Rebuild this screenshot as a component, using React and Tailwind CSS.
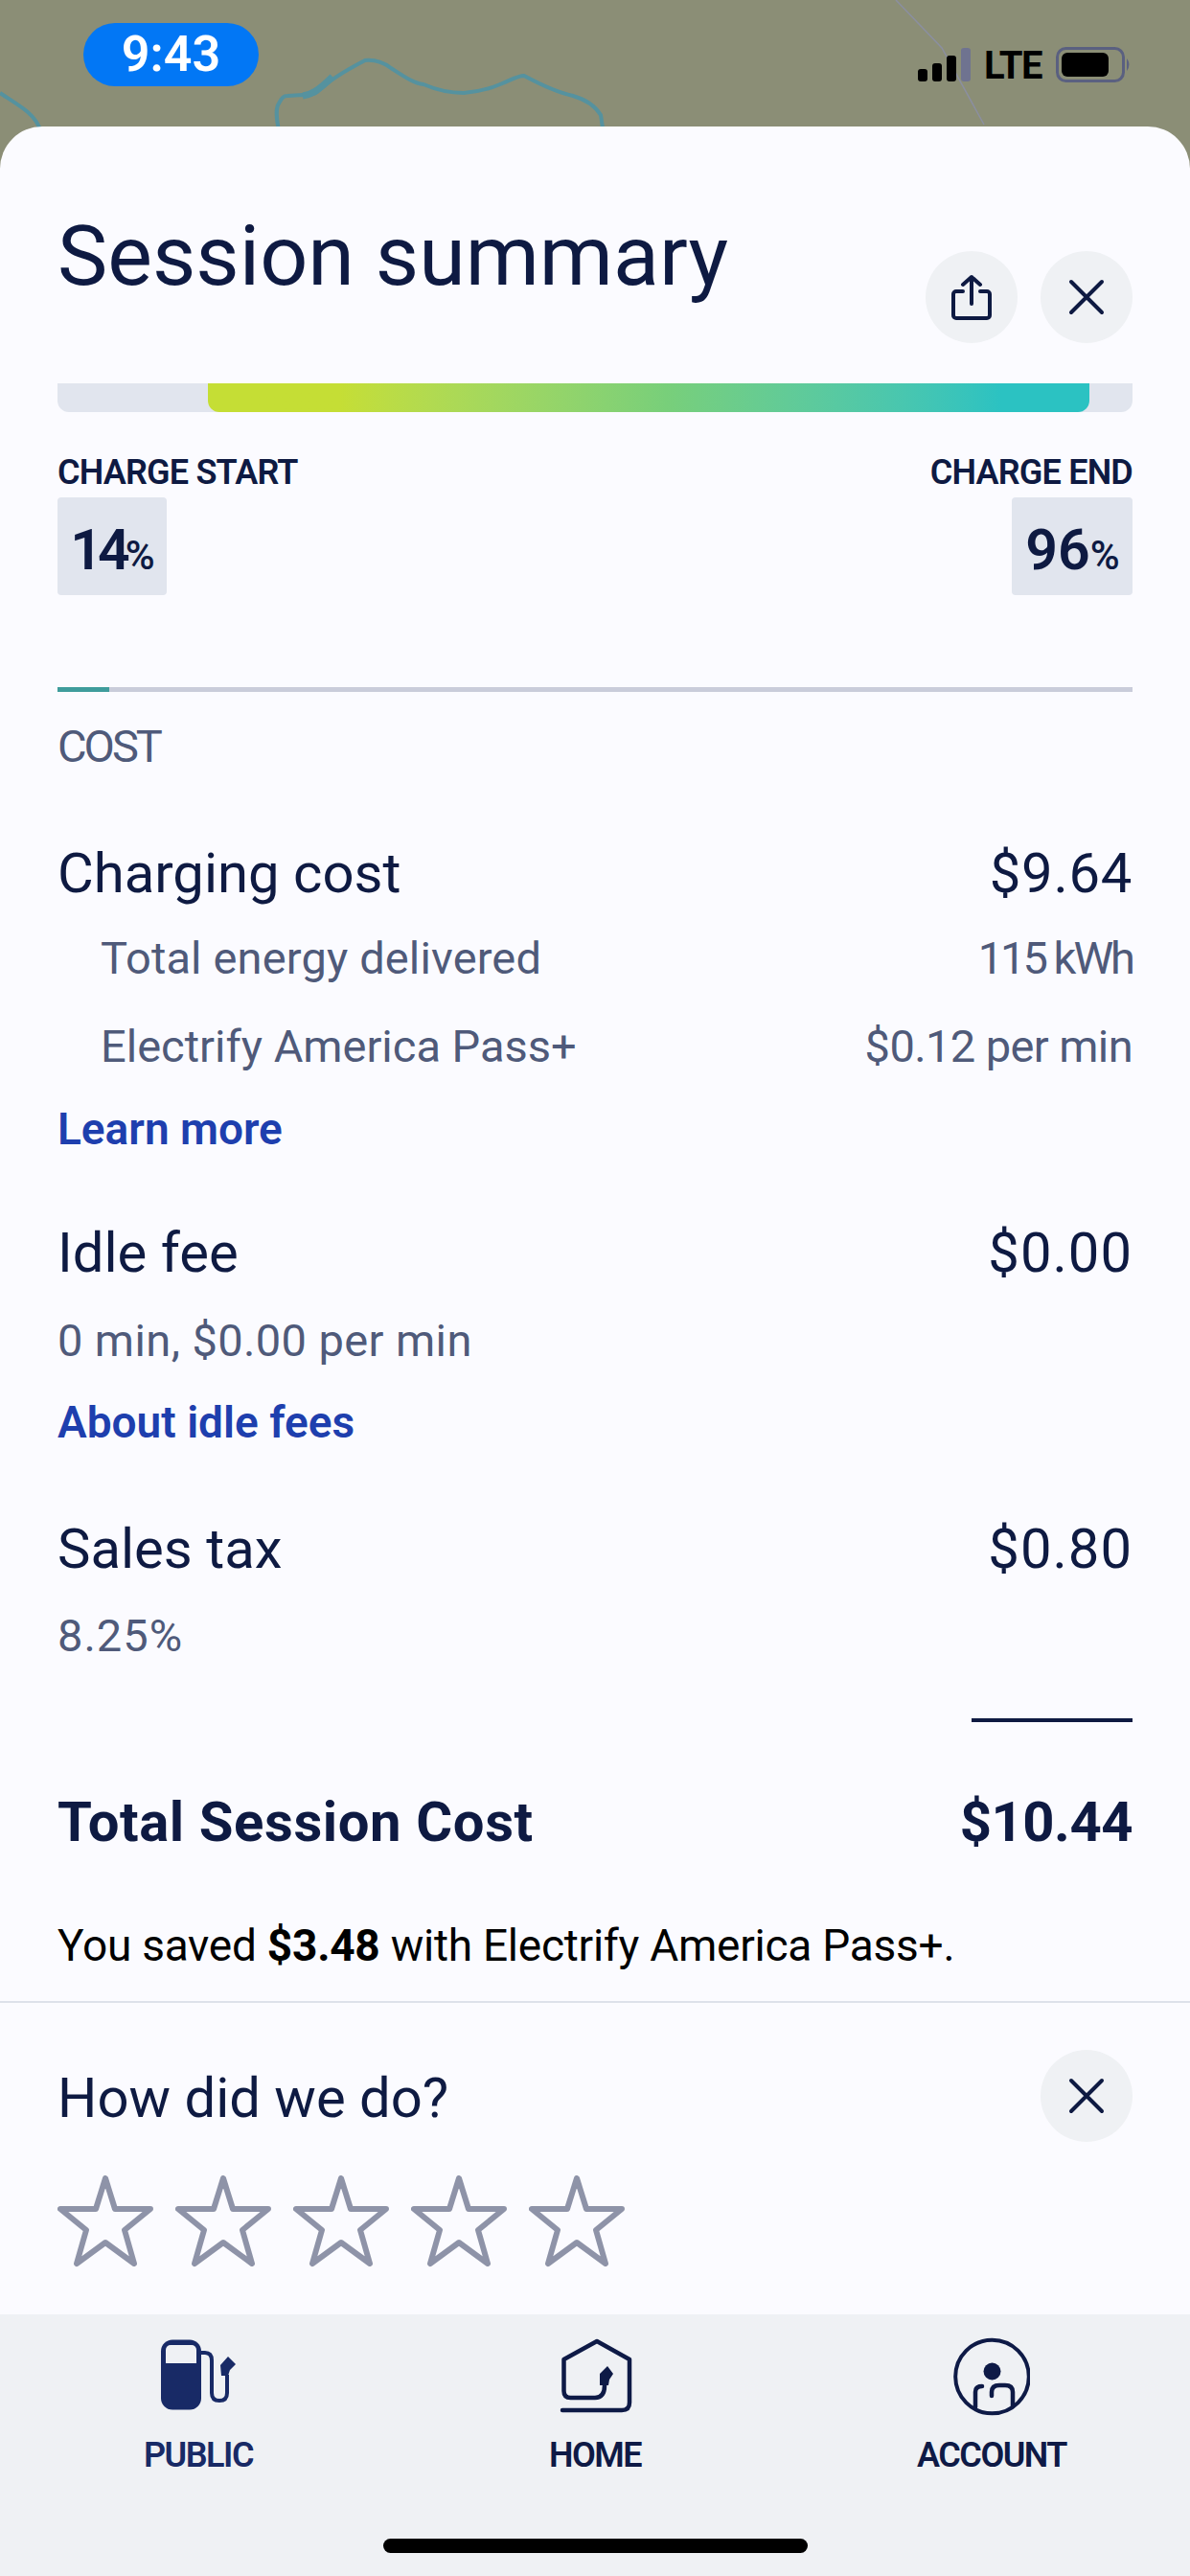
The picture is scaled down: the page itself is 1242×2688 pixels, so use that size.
import React from "react"

const CloseIcon = () => (
  <svg width="40" height="40" viewBox="0 0 40 40" fill="none" stroke="#0e1a42" strokeWidth="4" strokeLinecap="round">
    <path d="M4 4 L36 36 M36 4 L4 36" />
  </svg>
)

const ShareIcon = () => (
  <svg width="44" height="48" viewBox="0 0 44 48" fill="none" stroke="#0e1a42" strokeWidth="4" strokeLinecap="round" strokeLinejoin="round">
    <path d="M13 18 H6 a3 3 0 0 0 -3 3 V43 a3 3 0 0 0 3 3 H38 a3 3 0 0 0 3 -3 V21 a3 3 0 0 0 -3 -3 H31" />
    <path d="M22 31 V3 M13 11 L22 3 L31 11" />
  </svg>
)

const RoundButton = ({ children }) => (
  <button className="flex h-24 w-24 items-center justify-center rounded-full bg-[#eff1f4]">{children}</button>
)

const Star = () => (
  <svg width="100" height="96" viewBox="0 0 100 96" fill="none" stroke="#8e93a8" strokeWidth="6" strokeLinejoin="round">
    <path d="M50 3 L60 35 H97 L70 57 L80 92 L50 70 L20 92 L30 57 L3 35 H40 Z" />
  </svg>
)

const PublicIcon = () => (
  <svg width="80" height="80" viewBox="67 20 80 80">
    <rect x="68" y="21.5" width="42" height="73" rx="12" fill="#182a66" />
    <path d="M73 46 V32 a5 5 0 0 1 5 -5 H100 a5 5 0 0 1 5 5 V46 Z" fill="#eff1f4" />
    <path d="M110 35 H114 q7 0 7 8 V77 q0 8 8 8 q8 0 8 -8 V58" fill="none" stroke="#182a66" strokeWidth="4" />
    <path d="M130 48 L138 39 L146 47 L140 53 L138 59 H131 Z" fill="#182a66" />
  </svg>
)

const HomeIcon = () => (
  <svg width="80" height="80" viewBox="40 20 80 80">
    <path
      d="M46 95 H108 q8 0 8 -8 V42 L82 23 L47.5 42 V75 q0 7 7 7 H80 q10 0 10 -13"
      fill="none"
      stroke="#0e1a46"
      strokeWidth="4.5"
      strokeLinecap="round"
      strokeLinejoin="round"
    />
    <path d="M85 57 L93 49 L99 57 L95 63 L94 69 H85 Z" fill="#0e1a46" />
  </svg>
)

const AccountIcon = () => (
  <svg width="80" height="84" viewBox="34 16 80 84">
    <circle cx="74.5" cy="58" r="38.3" fill="none" stroke="#0e1a46" strokeWidth="4" />
    <circle cx="74.5" cy="52.5" r="9" fill="#0e1a46" />
    <path
      d="M57 90 V74 q0 -6 7 -6 M74 78 V74 q0 -7 8 -7 h6 q8 0 8 7 V89"
      fill="none"
      stroke="#0e1a46"
      strokeWidth="4.5"
      strokeLinecap="round"
    />
  </svg>
)

const MapLines = () => (
  <svg className="absolute left-0 top-0" width="1242" height="180" viewBox="0 0 1242 180" fill="none">
    <path d="M0 97 C12 105 22 111 29 117 C35 122 40 128 44 140" stroke="#55929f" strokeWidth="4" />
    <path
      d="M292 140 C288 124 288 112 291 108 C294 102 296 100 300 100 L316 99 C322 100 327 99 331 96 C340 87 352 78 381 63 C392 62 400 65 408 71 C422 80 432 87 442 88 C456 94 470 97 484 97 C498 96 510 93 522 88 C532 84 540 79 547 79 C560 86 580 96 598 100 C612 104 622 112 627 120 L630 140"
      stroke="#55929f"
      strokeWidth="4"
    />
    <path d="M316 100 C324 99 332 95 347 80" stroke="#55929f" strokeWidth="7" />
    <path d="M935 0 L983 50 L1027 130" stroke="#8b8fa0" strokeWidth="1.5" />
  </svg>
)

const SignalIcon = () => (
  <svg width="56" height="36" viewBox="0 0 56 36">
    <rect x="0" y="22" width="10" height="13" rx="3" fill="#000" />
    <rect x="15" y="16" width="10" height="19" rx="3" fill="#000" />
    <rect x="30" y="8" width="10" height="27" rx="3" fill="#000" />
    <rect x="45" y="0" width="10" height="35" rx="3" fill="#6f7390" />
  </svg>
)

const BatteryIcon = () => (
  <svg width="80" height="38" viewBox="0 0 80 38">
    <rect x="1.5" y="1.5" width="69" height="34" rx="9" fill="none" stroke="#5a6080" strokeWidth="3" />
    <rect x="6" y="6" width="49" height="25" rx="6" fill="#000" />
    <path d="M74 12 Q79 18 74 25 Z" fill="#5a6080" />
  </svg>
)

const CostRow = ({ label, value, className, labelClass = "", valueClass = "" }) => (
  <div className={`flex items-center justify-between ${className}`}>
    <span className={labelClass}>{label}</span>
    <span className={valueClass}>{value}</span>
  </div>
)

const Percent = ({ value, className, digitsClass = "" }) => (
  <div className={`flex h-[102px] items-baseline justify-center rounded-[4px] bg-[#e1e5ee] pt-[25px] ${className}`}>
    <span className={`text-[59px] font-semibold leading-none ${digitsClass}`}>{value}</span>
    <span className="text-[42px] font-medium leading-none tracking-[-1px]">%</span>
  </div>
)

const TabItem = ({ icon, label, color }) => (
  <div className="flex flex-col items-center">
    <div className="flex h-[84px] items-center justify-center">{icon}</div>
    <span className={`mt-[18px] text-[36px] font-semibold leading-[44px] tracking-[-1.5px] ${color}`}>{label}</span>
  </div>
)

const subText = "text-[47px] font-normal leading-[56px] text-[#4f5a7a]"
const linkText = "text-[46px] font-semibold leading-[56px] text-[#1e3fae]"
const headRow = "text-[58px] leading-[72px]"

const App = () => {
  return (
    <div className="relative flex h-[2688px] w-[1242px] flex-col overflow-hidden bg-[#8b8e76] font-['Roboto',sans-serif] text-[#0e1a42]">
      <MapLines />

      <div className="relative flex h-[132px] shrink-0 items-start justify-between pl-[87px] pr-[60px]">
        <div className="mt-6 flex h-[66px] w-[183px] items-center justify-center rounded-[33px] bg-[#0277f5] text-[52px] font-semibold text-white">
          9:43
        </div>
        <div className="mt-[50px] flex items-start">
          <SignalIcon />
          <span className="ml-[13px] mt-[-3px] text-[40px] font-bold leading-[44px] tracking-[-1.5px] text-black">LTE</span>
          <span className="ml-[15px] mt-[-1px]">
            <BatteryIcon />
          </span>
        </div>
      </div>

      <div className="relative flex min-h-0 flex-1 flex-col rounded-t-[44px] bg-[#fbfbff]">
        <div className="flex flex-col px-[60px]">
          <div className="flex h-[268px] items-start justify-between">
            <h1 className="mt-[80px] text-[88px] font-normal leading-[110px]">Session summary</h1>
            <div className="mt-[130px] flex gap-6">
              <RoundButton>
                <ShareIcon />
              </RoundButton>
              <RoundButton>
                <CloseIcon />
              </RoundButton>
            </div>
          </div>

          <div className="h-[30px] rounded-b-[12px] bg-[#e1e5ee] pl-[157px] pr-[45px]">
            <div className="h-full rounded-b-[12px] bg-gradient-to-r from-[#c5de35] from-[15%] via-[#78cf7a] via-[52%] to-[#2bc2c2] to-[90%]" />
          </div>

          <div className="mt-[41px] flex justify-between">
            <div className="flex flex-col items-start">
              <span className="text-[36px] font-semibold leading-[44px] tracking-[-0.8px]">CHARGE START</span>
              <Percent value="14" digitsClass="tracking-[-5px]" className="mt-[4px] w-[114px]" />
            </div>
            <div className="flex flex-col items-end">
              <span className="text-[36px] font-semibold leading-[44px] tracking-[-0.8px]">CHARGE END</span>
              <Percent value="96" className="mt-[4px] w-[126px]" />
            </div>
          </div>

          <div className="mt-[96px] h-[5px] bg-[#c9ccda]">
            <div className="h-full w-[54px] bg-[#3f9c9c]" />
          </div>

          <div className={`mt-[29px] tracking-[-3px] ${subText}`}>COST</div>

          <CostRow label="Charging cost" value="$9.64" valueClass="tracking-[0.7px]" className={`mt-[68px] ${headRow}`} />
          <CostRow
            label="Total energy delivered"
            labelClass="tracking-[0.15px]"
            value="115 kWh"
            valueClass="tracking-[-3px]"
            className={`mt-[25px] pl-[45px] ${subText}`}
          />
          <CostRow
            label="Electrify America Pass+"
            value="$0.12 per min"
            valueClass="tracking-[-0.6px]"
            className={`mt-[36px] pl-[45px] ${subText}`}
          />
          <div className={`mt-[30px] ${linkText}`}>Learn more</div>

          <CostRow label="Idle fee" value="$0.00" valueClass="tracking-[1px]" className={`mt-[65px] ${headRow}`} />
          <div className={`mt-[28px] tracking-[0.4px] ${subText}`}>0 min, $0.00 per min</div>
          <div className={`mt-[29px] ${linkText}`}>About idle fees</div>

          <CostRow label="Sales tax" value="$0.80" valueClass="tracking-[1px]" className={`mt-[68px] ${headRow}`} />
          <div className={`mt-[27px] tracking-[1px] ${subText}`}>8.25%</div>

          <div className="mt-[58px] h-1 w-[168px] self-end bg-[#0e1a42]" />

          <CostRow
            label="Total Session Cost"
            value="$10.44"
            labelClass="tracking-[0.6px]"
            valueClass="tracking-[-0.5px]"
            className="mt-[68px] text-[58px] font-bold leading-[72px]"
          />

          <p className="mt-[65px] text-[46px] font-normal leading-[56px] tracking-[-0.25px] text-black">
            You saved <span className="font-bold">$3.48</span> with Electrify America Pass+.
          </p>
        </div>

        <div className="mt-[30px] h-[2px] bg-[#dde1ea]" />

        <div className="flex flex-1 flex-col px-[60px]">
          <div className="mt-[49px] flex items-center justify-between">
            <span className="mt-[3px] text-[58px] font-normal leading-[72px]">How did we do?</span>
            <RoundButton>
              <CloseIcon />
            </RoundButton>
          </div>
          <div className="mt-[35px] flex gap-[23px]">
            <Star />
            <Star />
            <Star />
            <Star />
            <Star />
          </div>
        </div>

        <div className="relative grid h-[273px] shrink-0 grid-cols-3 bg-[#eff1f4] pt-[23px]">
          <TabItem icon={<PublicIcon />} label="PUBLIC" color="text-[#182a66]" />
          <TabItem icon={<HomeIcon />} label="HOME" color="text-[#0e1a46]" />
          <TabItem icon={<AccountIcon />} label="ACCOUNT" color="text-[#0e1a46]" />
          <div className="absolute bottom-[24px] left-[400px] h-[15px] w-[443px] rounded-full bg-black" />
        </div>
      </div>
    </div>
  )
}

export default App
